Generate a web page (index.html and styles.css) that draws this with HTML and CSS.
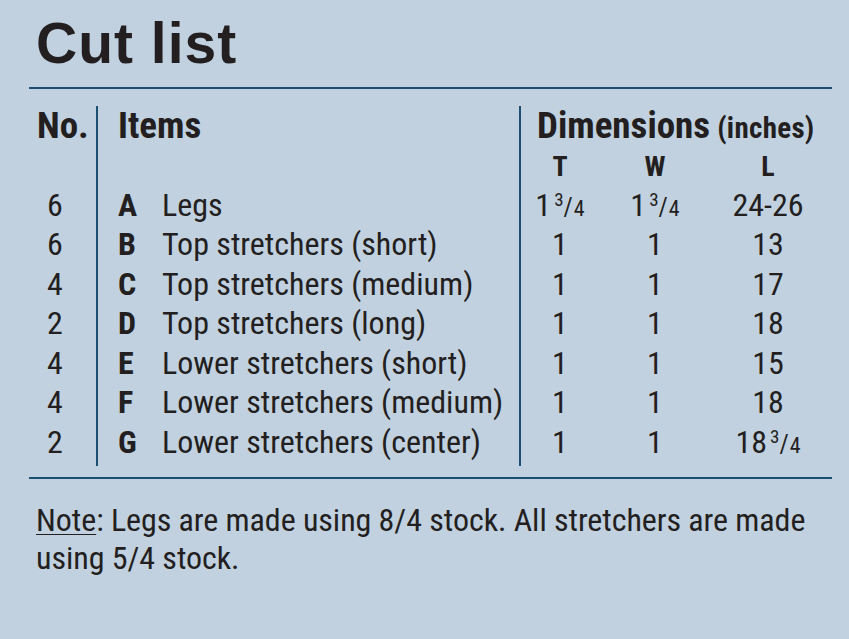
FILE: index.html
```html
<!DOCTYPE html>
<html>
<head>
<meta charset="utf-8">
<link rel="stylesheet" href="styles.css">
</head>
<body>
<div class="page">
  <h1 class="title">Cut list</h1>
  <div class="rule"></div>
  <div class="table">
    <div class="c no head">No.</div>
    <div class="c items head">Items</div>
    <div class="c dims head span3">Dimensions <span class="unit">(inches)</span></div>

    <div class="c no"></div>
    <div class="c items"></div>
    <div class="c t sub">T</div>
    <div class="c w sub">W</div>
    <div class="c l sub">L</div>

    <div class="c no">6</div>
    <div class="c items"><b class="key">A</b>Legs</div>
    <div class="c t"><span>1<span class="num">3</span><span class="sl">/</span><span class="den">4</span></span></div>
    <div class="c w"><span>1<span class="num">3</span><span class="sl">/</span><span class="den">4</span></span></div>
    <div class="c l">24-26</div>

    <div class="c no">6</div>
    <div class="c items"><b class="key">B</b>Top stretchers (short)</div>
    <div class="c t">1</div>
    <div class="c w">1</div>
    <div class="c l">13</div>

    <div class="c no">4</div>
    <div class="c items"><b class="key">C</b>Top stretchers (medium)</div>
    <div class="c t">1</div>
    <div class="c w">1</div>
    <div class="c l">17</div>

    <div class="c no">2</div>
    <div class="c items"><b class="key">D</b>Top stretchers (long)</div>
    <div class="c t">1</div>
    <div class="c w">1</div>
    <div class="c l">18</div>

    <div class="c no">4</div>
    <div class="c items"><b class="key">E</b>Lower stretchers (short)</div>
    <div class="c t">1</div>
    <div class="c w">1</div>
    <div class="c l">15</div>

    <div class="c no">4</div>
    <div class="c items"><b class="key">F</b>Lower stretchers (medium)</div>
    <div class="c t">1</div>
    <div class="c w">1</div>
    <div class="c l">18</div>

    <div class="c no last">2</div>
    <div class="c items last"><b class="key">G</b>Lower stretchers (center)</div>
    <div class="c t last">1</div>
    <div class="c w last">1</div>
    <div class="c l last"><span>18<span class="num">3</span><span class="sl">/</span><span class="den">4</span></span></div>
  </div>
  <div class="rule"></div>
  <p class="note"><span class="ul">Note</span>: Legs are made using 8/4 stock. All stretchers are made using 5/4 stock.</p>
</div>
</body>
</html>
```

FILE: styles.css
```css
html, body {
  margin: 0;
  padding: 0;
  background: #c1d1e0;
}
body {
  color: #231f20;
  font-family: "Roboto Condensed", "Roboto", "Liberation Sans", sans-serif;
  font-stretch: 75%;
  width: 849px;
  height: 639px;
  overflow: hidden;
}
.page {
  padding: 0 17px 0 29px;
}
.title {
  margin: 0;
  padding: 8px 0 0 7px;
  height: 87px;
  box-sizing: border-box;
  font-family: "Liberation Sans", Arial, sans-serif;
  font-stretch: normal;
  font-weight: bold;
  font-size: 57px;
  line-height: 70px;
  letter-spacing: 1px;
}
.rule {
  height: 2px;
  background: #1c4e72;
}
.table {
  display: grid;
  grid-template-columns: 67px 423px 82px 108px 118px;
  grid-template-rows: repeat(8, 39.5px) 43.5px;
  margin: 17px 0 11.5px;
  font-size: 32px;
}
.c {
  display: flex;
  align-items: center;
  white-space: nowrap;
}
.no {
  padding-left: 18px;
}
.no.head {
  padding-left: 8px;
}
.items {
  border-left: 2px solid #1c4e72;
  padding-left: 20px;
}
.t, .dims {
  border-left: 2px solid #1c4e72;
}
.t, .w, .l {
  justify-content: center;
}
.t {
  padding-right: 2px;
}
.last {
  padding-bottom: 4px;
  box-sizing: border-box;
}
.head {
  font-weight: bold;
  font-size: 37px;
}
.span3 {
  grid-column: span 3;
  padding-left: 16px;
}
.unit {
  font-size: 29px;
  letter-spacing: 0.3px;
  margin-left: 7px;
  position: relative;
  top: 2px;
}
.sub {
  font-weight: bold;
  font-size: 28px;
  padding-top: 2px;
}
.key {
  display: inline-block;
  width: 44px;
  font-weight: bold;
}
.num {
  font-size: 19px;
  position: relative;
  top: -10px;
  margin-left: 3px;
}
.sl {
  font-size: 25px;
  margin: 0 1px 0 0;
}
.den {
  font-size: 22px;
}
.note {
  margin: 22px 0 0 7px;
  font-size: 32px;
  line-height: 38px;
  letter-spacing: -0.05px;
  width: 785px;
}
.ul {
  text-decoration: underline;
  text-decoration-thickness: 1px;
  text-underline-offset: 3px;
}
```
